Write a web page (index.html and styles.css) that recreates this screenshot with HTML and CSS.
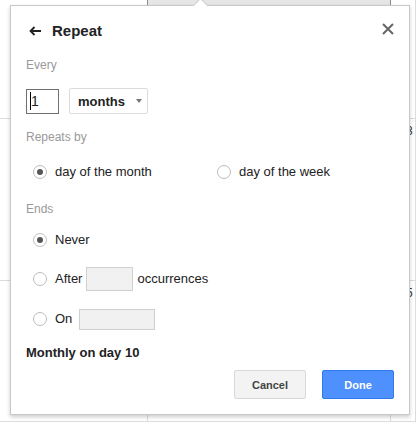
FILE: index.html
```html
<!DOCTYPE html>
<html>
<head>
<meta charset="utf-8">
<link rel="stylesheet" href="styles.css">
</head>
<body>
<div class="calendar">
  <div class="cell"></div>
  <div class="cell"><div class="band"></div></div>
  <div class="cell"></div>
  <div class="cell"></div>
  <div class="cell"></div>
  <div class="cell"><span class="date">3</span></div>
  <div class="cell"></div>
  <div class="cell"></div>
  <div class="cell"><span class="date">5</span></div>
</div>

<div class="dialog">
  <div class="header">
    <svg class="back" width="12" height="10" viewBox="0 0 12 10"><path d="M12 5H1.5M5.5 1L1.5 5l4 4" fill="none" stroke="#222" stroke-width="1.8"/></svg>
    <span class="title">Repeat</span>
    <svg class="close" width="12" height="12" viewBox="0 0 12 12"><path d="M1 1L11 11M11 1L1 11" fill="none" stroke="#666" stroke-width="2"/></svg>
  </div>

  <div class="label l-every">Every</div>
  <div class="every-row">
    <div class="num"><span class="caret"></span>1</div>
    <div class="select"><span>months</span><span class="arrow"></span></div>
  </div>

  <div class="label l-repeats">Repeats by</div>
  <div class="opt-group">
    <div class="opt first"><span class="radio on"></span><span>day of the month</span></div>
    <div class="opt"><span class="radio"></span><span>day of the week</span></div>
  </div>

  <div class="label l-ends">Ends</div>
  <div class="opt row-never"><span class="radio on"></span><span>Never</span></div>
  <div class="opt row-after"><span class="radio"></span><span>After</span><span class="box box-after"></span><span>occurrences</span></div>
  <div class="opt row-on"><span class="radio"></span><span>On</span><span class="box box-on"></span></div>

  <div class="summary">Monthly on day 10</div>

  <div class="buttons">
    <div class="btn cancel">Cancel</div>
    <div class="btn done">Done</div>
  </div>
</div>
</body>
</html>
```
FILE: styles.css
```css
html, body {
  margin: 0;
  padding: 0;
  width: 416px;
  height: 422px;
  overflow: hidden;
  background: #fff;
  font-family: "Liberation Sans", Arial, sans-serif;
}

.calendar {
  display: grid;
  grid-template-columns: 148px 243px 1fr;
  grid-template-rows: 119px 162px 1fr;
  width: 416px;
  height: 422px;
}

.cell {
  box-sizing: border-box;
  border-right: 1px solid #dcdcdc;
  border-bottom: 1px solid #dcdcdc;
}

.band {
  height: 5px;
  margin: 0 -1px;
  background: #e6e6e6;
  border-left: 1px solid #8a8a8a;
  border-right: 1px solid #8a8a8a;
}

.date {
  display: block;
  padding: 5px 0 0 15px;
  font-size: 12px;
  line-height: 14px;
  color: #333;
}

.dialog {
  position: absolute;
  left: 10px;
  top: 5px;
  width: 400px;
  height: 410px;
  box-sizing: border-box;
  border: 1px solid #c8c8c8;
  background: #fff;
  box-shadow: 0 2px 4px rgba(0, 0, 0, 0.2);
  padding: 15px;
  color: #222;
  display: flex;
  flex-direction: column;
}

.dialog::before {
  content: "";
  position: absolute;
  width: 10px;
  height: 10px;
  top: -6px;
  left: 184px;
  background: #fff;
  border-top: 1px solid #c8c8c8;
  border-left: 1px solid #c8c8c8;
  transform: rotate(45deg);
}

.header {
  display: flex;
  align-items: center;
  height: 20px;
}

.back {
  margin-left: 3px;
  margin-right: 11px;
}

.title {
  font-size: 15px;
  font-weight: bold;
  line-height: 20px;
}

.close {
  margin-left: auto;
  margin-bottom: 5px;
}

.label {
  font-size: 12px;
  line-height: 14px;
  color: #999;
}

.l-every { margin-top: 17px; }
.l-repeats { margin-top: 16px; }
.l-ends { margin-top: 20px; }

.every-row {
  display: flex;
  align-items: center;
  gap: 10px;
  height: 26px;
  margin-top: 16px;
}

.num {
  box-sizing: border-box;
  width: 33px;
  height: 25px;
  border: 1px solid #707070;
  display: flex;
  align-items: center;
  padding-left: 3px;
  font-size: 14px;
  color: #222;
}

.caret {
  width: 1px;
  height: 18px;
  background: #000;
}

.select {
  box-sizing: border-box;
  width: 79px;
  height: 26px;
  border: 1px solid #dcdcdc;
  border-radius: 2px;
  display: flex;
  align-items: center;
  justify-content: space-between;
  padding: 0 5px 0 8px;
  font-size: 13px;
  font-weight: bold;
  color: #222;
}

.arrow {
  width: 0;
  height: 0;
  border-left: 3.5px solid transparent;
  border-right: 3.5px solid transparent;
  border-top: 4px solid #777;
}

.opt-group {
  display: flex;
  margin-top: 18px;
  margin-left: 7px;
  height: 20px;
}

.opt {
  display: flex;
  align-items: center;
  gap: 8px;
  font-size: 13px;
  line-height: 16px;
  color: #222;
}

.opt-group .opt.first {
  width: 184px;
}

.row-never,
.row-after,
.row-on {
  margin-left: 7px;
}

.row-never { margin-top: 14px; height: 20px; }
.row-after { margin-top: 17px; height: 24px; gap: 4px; }
.row-on { margin-top: 16px; height: 24px; gap: 4px; }

.row-after .radio,
.row-on .radio {
  margin-right: 4px;
}

.radio {
  box-sizing: border-box;
  width: 14px;
  height: 14px;
  border: 1px solid #bdbdbd;
  border-radius: 50%;
  background: #fff;
  display: flex;
  align-items: center;
  justify-content: center;
  flex: none;
}

.radio.on::after {
  content: "";
  width: 6px;
  height: 6px;
  border-radius: 50%;
  background: #555;
}

.box {
  box-sizing: border-box;
  background: #f1f1f1;
  border: 1px solid #d0d0d0;
}

.box-after {
  width: 47px;
  height: 24px;
}

.box-on {
  width: 76px;
  height: 21px;
  margin-left: 3px;
}

.summary {
  margin-top: 14px;
  font-size: 13px;
  font-weight: bold;
  line-height: 16px;
  color: #222;
}

.buttons {
  display: flex;
  justify-content: flex-end;
  gap: 16px;
  margin-top: 9px;
}

.btn {
  box-sizing: border-box;
  width: 72px;
  height: 29px;
  border-radius: 2px;
  display: flex;
  align-items: center;
  justify-content: center;
  font-size: 11px;
  font-weight: bold;
}

.cancel {
  background: #f3f3f3;
  border: 1px solid #d9d9d9;
  color: #444;
}

.done {
  background: #4d90fe;
  border: 1px solid #3079ed;
  color: #fff;
}
```
